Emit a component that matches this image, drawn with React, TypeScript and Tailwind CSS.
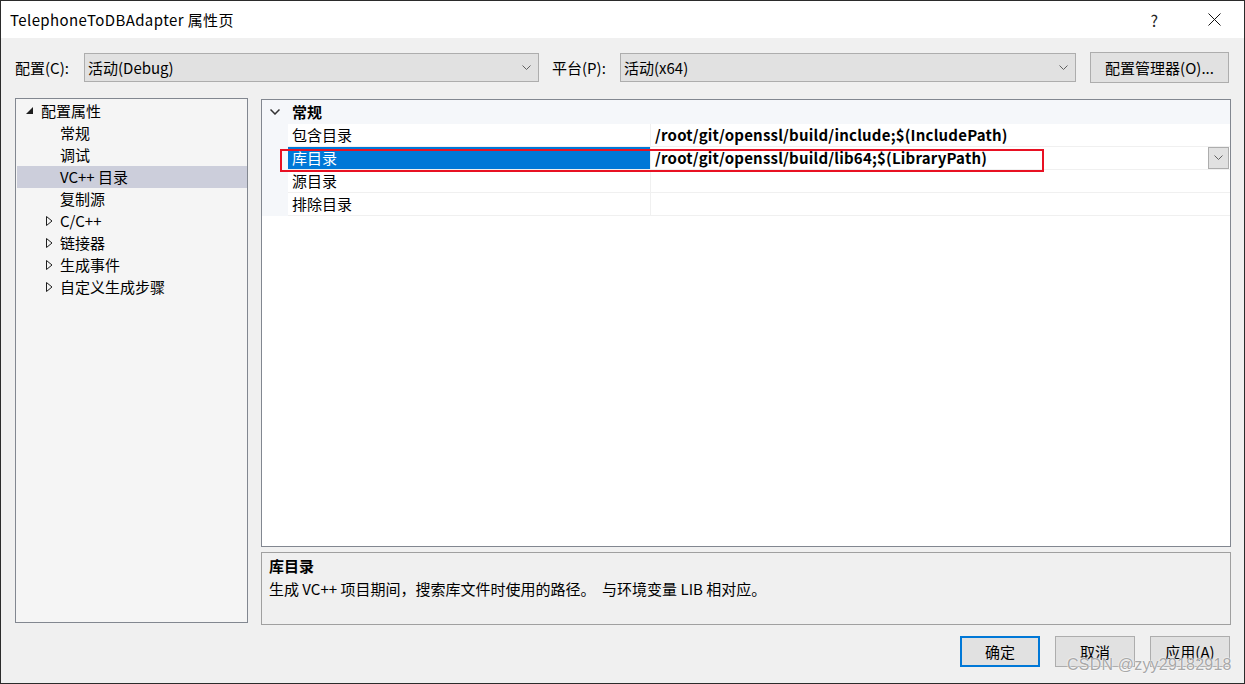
import React from "react";

const Chevron = ({ c = "#606060" }: { c?: string }) => (
  <svg width="9" height="6" viewBox="0 0 9 6">
    <polyline points="0.5,0.5 4.5,4.5 8.5,0.5" fill="none" stroke={c} strokeWidth="1" />
  </svg>
);

const Combo = ({ text, w }: { text: string; w: string }) => (
  <div className={`${w} h-[29px] bg-[#e1e1e1] border border-[#adadad] flex items-center pl-[3px] pr-[7px]`}>
    <span className="flex-1 text-black">{text}</span>
    <Chevron />
  </div>
);

const treeItems: { t: string; kind: "open" | "leaf" | "closed"; sel?: boolean }[] = [
  { t: "配置属性", kind: "open" },
  { t: "常规", kind: "leaf" },
  { t: "调试", kind: "leaf" },
  { t: "VC++ 目录", kind: "leaf", sel: true },
  { t: "复制源", kind: "leaf" },
  { t: "C/C++", kind: "closed" },
  { t: "链接器", kind: "closed" },
  { t: "生成事件", kind: "closed" },
  { t: "自定义生成步骤", kind: "closed" },
];

const rows = [
  { k: "包含目录", v: "/root/git/openssl/build/include;$(IncludePath)" },
  { k: "库目录", v: "/root/git/openssl/build/lib64;$(LibraryPath)", sel: true },
  { k: "源目录", v: "" },
  { k: "排除目录", v: "" },
];

export default function App() {
  return (
    <div className="w-[1245px] h-[684px] border border-[#2b2b2b] bg-[#f0f0f0] flex flex-col font-['Noto_Sans_CJK_SC',sans-serif] text-[15px] text-black leading-[20px] overflow-hidden relative">
      {/* title bar */}
      <div className="h-[37px] bg-white flex items-center pl-[9px] shrink-0">
        <span className="text-[15px] flex-1 tracking-[0.4px]">TelephoneToDBAdapter 属性页</span>
        <span className="text-[16px] text-[#222] mr-[50px]">?</span>
        <svg width="13" height="13" viewBox="0 0 13 13" className="mr-[23px]">
          <path d="M0.5 0.5 L12.5 12.5 M12.5 0.5 L0.5 12.5" stroke="#111" strokeWidth="1" />
        </svg>
      </div>

      {/* config row */}
      <div className="flex items-center pl-[14px] mt-[14px] h-[31px] shrink-0">
        <span className="w-[69px]">配置(C):</span>
        <Combo text="活动(Debug)" w="w-[455px]" />
        <span className="ml-[13px] w-[68px]">平台(P):</span>
        <Combo text="活动(x64)" w="w-[456px]" />
        <div className="ml-[14px] w-[139px] h-[31px] bg-[#e1e1e1] border border-[#adadad] flex items-center justify-center">
          配置管理器(O)...
        </div>
      </div>

      {/* main */}
      <div className="flex pl-[14px] mt-[15px] shrink-0">
        {/* tree */}
        <div className="w-[233px] h-[525px] border border-[#828790] bg-[#f5f5f5] pt-[1px] pl-[1px]">
          {treeItems.map((it) => (
            <div key={it.t} className={`h-[22px] flex items-center ${it.sel ? "bg-[#cccedb]" : ""}`}>
              {it.kind === "open" && (
                <>
                  <svg width="8" height="8" viewBox="0 0 8 8" className="ml-[9px] mr-[7px]">
                    <polygon points="7,0 7,7 0,7" fill="#1e1e1e" />
                  </svg>
                  <span>{it.t}</span>
                </>
              )}
              {it.kind === "leaf" && <span className="ml-[43px]">{it.t}</span>}
              {it.kind === "closed" && (
                <>
                  <svg width="7" height="10" viewBox="0 0 7 10" className="ml-[29px] mr-[7px]">
                    <polygon points="0.5,0.5 6,5 0.5,9.5" fill="none" stroke="#1e1e1e" strokeWidth="1" />
                  </svg>
                  <span>{it.t}</span>
                </>
              )}
            </div>
          ))}
        </div>

        {/* right */}
        <div className="ml-[13px] w-[970px] flex flex-col">
          <div className="h-[448px] mt-[1px] border border-[#828790] bg-white relative">
            <div className="h-[24px] bg-[#f5f7fa] flex items-center">
              <svg width="10" height="6" viewBox="0 0 10 6" className="ml-[8px] mr-[12px]">
                <polyline points="0.5,0.5 5,5 9.5,0.5" fill="none" stroke="#333" strokeWidth="1.5" />
              </svg>
              <span className="font-bold">常规</span>
            </div>
            {rows.map((r) => (
              <div key={r.k} className="h-[23px] flex">
                <div className="w-[26px] bg-[#f5f7fa]" />
                <div
                  className={`w-[362px] flex items-center pl-[4px] border-b border-[#f0f0f0] ${
                    r.sel ? "bg-[#0078d7] text-white" : ""
                  }`}
                >
                  {r.k}
                </div>
                <div className="flex-1 flex items-center pl-[4px] border-l border-b border-[#f0f0f0] font-bold tracking-[0.2px]">
                  <span className="flex-1">{r.v}</span>
                  {r.sel && (
                    <div className="w-[21px] h-[22px] bg-[#e1e1e1] border border-[#adadad] flex items-center justify-center mr-[1px]">
                      <Chevron />
                    </div>
                  )}
                </div>
              </div>
            ))}
            <div className="absolute left-[18px] top-[49px] w-[764px] h-[23px] border-2 border-[#e81123]" />
          </div>
          <div className="h-[73px] mt-[5px] border border-[#a0a0a0] bg-[#f0f0f0] px-[7px] pt-[3px]">
            <div className="font-bold">库目录</div>
            <div className="mt-[3px]">生成 VC++ 项目期间，搜索库文件时使用的路径。&nbsp; 与环境变量 LIB 相对应。</div>
          </div>
        </div>
      </div>

      {/* buttons */}
      <div className="flex justify-end pr-[14px] mt-[11px] gap-[15px] shrink-0">
        <div className="w-[80px] h-[31px] bg-[#e1e1e1] border-2 border-[#0078d7] flex items-center justify-center">确定</div>
        <div className="w-[80px] h-[31px] bg-[#e1e1e1] border border-[#adadad] flex items-center justify-center">取消</div>
        <div className="w-[80px] h-[31px] bg-[#e1e1e1] border border-[#adadad] flex items-center justify-center">应用(A)</div>
      </div>

      <div className="absolute left-[1066px] top-[654px] text-[16px] text-[#a8a8a8] font-['Liberation_Sans',sans-serif] [text-shadow:0_0_1px_#fff,0_0_2px_#fff] tracking-[0.2px]">
        CSDN @zyy29182918
      </div>
    </div>
  );
}
